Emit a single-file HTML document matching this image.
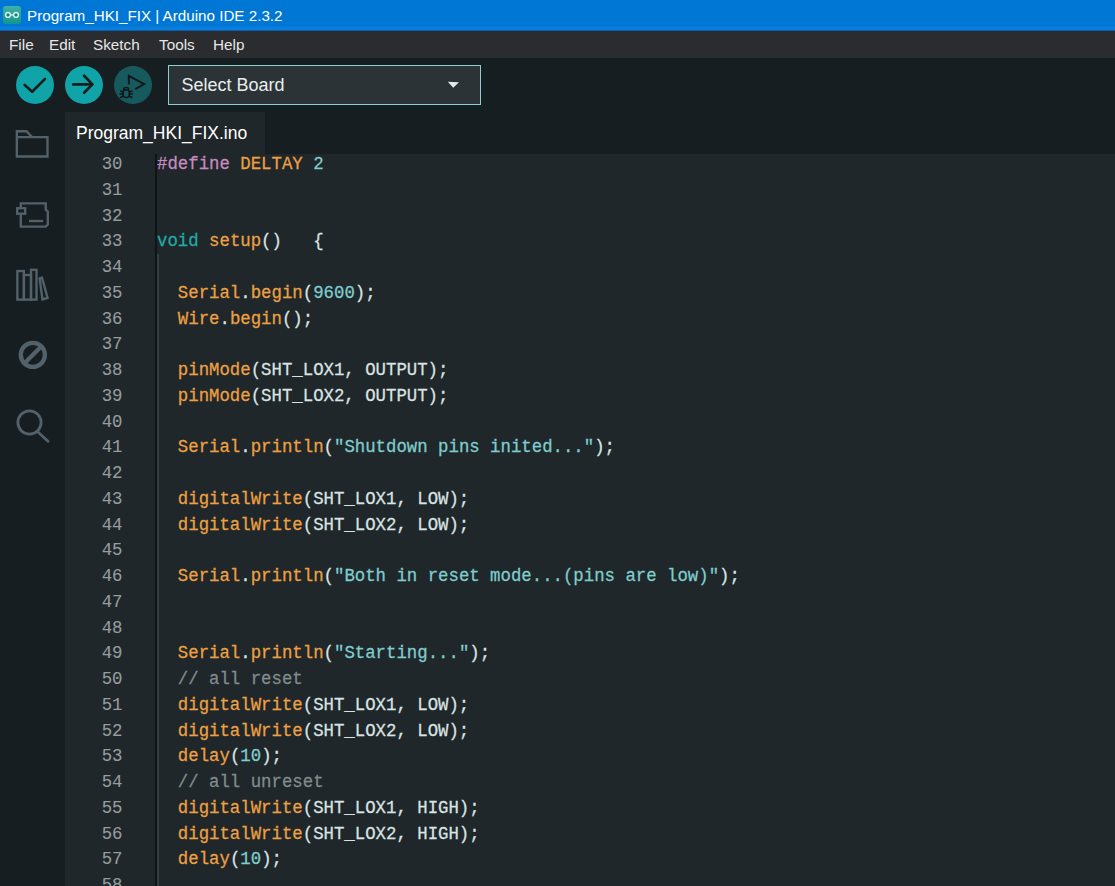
<!DOCTYPE html>
<html><head><meta charset="utf-8">
<style>
*{margin:0;padding:0;box-sizing:border-box}
html,body{width:1115px;height:886px;overflow:hidden;background:#1f272a;font-family:"Liberation Sans",sans-serif}
.abs{position:absolute}
#title{left:0;top:0;width:1115px;height:31px;background:linear-gradient(#0077d4 0,#0077d4 26px,#087ede 27.5px,#087fe0 30px,#0d3d66 31px)}
#title .t{left:27px;top:6.6px;font-size:15.2px;color:#fff;white-space:nowrap}
#logo{left:3px;top:6px;width:18px;height:18px;border-radius:3px;background:linear-gradient(#3fb0a6,#14978b)}
#menu{left:0;top:31px;width:1115px;height:27px;background:#2a2c2f}
#menu span{position:absolute;top:4.5px;font-size:15.3px;color:#e6e6e6}
#toolbar{left:0;top:58px;width:1115px;height:96px;background:#171e21}
#side{left:0;top:112px;width:65px;height:774px;background:#171e21}
#tab{left:65px;top:112px;width:200px;height:42px;background:#1f272a}
#tab span{position:absolute;left:11px;top:11.3px;font-size:17.5px;color:#fff;white-space:nowrap}
.btn{top:66px;width:38px;height:38px;border-radius:50%;background:#10a3a8}
#dd{left:168px;top:65px;width:313px;height:40px;background:#2c3337;border:1px solid #8ccfcc}
#dd span{position:absolute;left:12.5px;top:9px;font-size:18px;color:#e8eeee;white-space:nowrap}
#editor{left:65px;top:154px;width:1050px;height:732px;background:#1f272a}
#gl{left:155.2px;top:154px;width:1.6px;height:732px;background:#0e1417}
#ig{left:157px;top:254px;width:1.6px;height:632px;background:#363d41}
.ln{position:absolute;left:65px;width:57.5px;transform:scaleY(1.05);transform-origin:0 0;text-align:right;font-family:"Liberation Mono",monospace;font-size:17.35px;color:#959d9d;white-space:pre}
.cl{position:absolute;left:157px;transform:scaleY(1.05);transform-origin:0 0;font-family:"Liberation Mono",monospace;font-size:17.35px;color:#dae3e3;white-space:pre}
.f{color:#eda043}.k{color:#1eaca8}.s{color:#80cdce}.p{color:#c88ac4}.c{color:#808c8d}
.cl{-webkit-text-stroke:0.25px currentColor}.ln{-webkit-text-stroke:0.1px currentColor}
</style></head><body>
<div id="title" class="abs"><div id="logo" class="abs"></div><div class="t abs">Program_HKI_FIX | Arduino IDE 2.3.2</div></div>
<div id="menu" class="abs"><span style="left:9px">File</span><span style="left:49px">Edit</span><span style="left:93px">Sketch</span><span style="left:159px">Tools</span><span style="left:213px">Help</span></div>
<div id="toolbar" class="abs"></div>
<div class="btn abs" style="left:16px"></div>
<div class="btn abs" style="left:65px"></div>
<div class="btn abs" style="left:114px;background:#175a5e"></div>
<div id="dd" class="abs"><span>Select Board</span><svg class="abs" style="left:-169px;top:-66px" width="480" height="120"><polygon points="447.8,81.8 459,82.2 453.2,87.8" fill="#e0eaea"/></svg></div>
<div id="editor" class="abs"></div>
<div id="side" class="abs"></div>
<div id="tab" class="abs"><span>Program_HKI_FIX.ino</span></div>
<div id="gl" class="abs"></div><div id="ig" class="abs"></div>
<svg class="abs" style="left:0;top:0" width="1115" height="886" viewBox="0 0 1115 886">
<g fill="none" stroke="#171e21" stroke-width="2.7" stroke-linecap="round" stroke-linejoin="round">
<polyline points="24.7,84.9 32.2,91.7 45,78.9"/>
<line x1="73.2" y1="84.4" x2="91.9" y2="84.4"/>
<polyline points="84.1,75.8 92.4,84.4 84.1,92.7"/>
</g>
<g fill="none" stroke="#11181b" stroke-width="1.9" stroke-linejoin="miter">
<polyline points="128.8,84.4 128.8,75.9 144.2,84.1 135.2,89.1"/>
</g>
<g fill="none" stroke="#11181b" stroke-width="1.5" stroke-linecap="round">
<path d="M123.6,89.5 a2.6,2 0 0 1 5.2,0"/>
<rect x="123" y="89.8" width="6.4" height="7.6" rx="3"/>
<line x1="120.5" y1="91" x2="123" y2="92"/>
<line x1="120" y1="94" x2="123" y2="94"/>
<line x1="120.5" y1="97.5" x2="123.2" y2="96"/>
<line x1="132" y1="91" x2="129.4" y2="92"/>
<line x1="132.5" y1="94" x2="129.4" y2="94"/>
<line x1="132" y1="97.5" x2="129.2" y2="96"/>
</g>
<g fill="none" stroke="#52616a" stroke-width="2.35" stroke-linejoin="miter">
<path d="M16.85,156.5 V131.2 H26.5 L32,137.1 H47.5 V156.5 Z M16.85,137.1 H32"/>
<path d="M20.8,208 V203.3 H45.7 V209.5 L47.8,211.6 V224.5 L45.7,226.6 H20.8 V213.7"/>
<rect x="17.2" y="208.2" width="8" height="5.5"/>
<line x1="29" y1="221" x2="43.2" y2="221"/>
<rect x="17.35" y="271.05" width="6.55" height="28.55"/><rect x="23.9" y="275" width="7.1" height="24.6"/><rect x="31" y="269.8" width="5.5" height="29.8"/>
<polygon points="39.6,278.4 42,277.7 47.6,297.9 42.5,299.4"/>
</g>
<g fill="none" stroke="#52616a">
<circle cx="32.85" cy="354.85" r="12.05" stroke-width="4.3"/>
<line x1="41.2" y1="346.5" x2="24.5" y2="363.2" stroke-width="4.3"/>
<circle cx="29.5" cy="422.5" r="11.6" stroke-width="2.8"/>
<line x1="38.2" y1="432.2" x2="48" y2="441.2" stroke-width="2.8" stroke-linecap="round"/>
</g>
<g>
<circle cx="8.0" cy="14.9" r="2.35" fill="#167d72" stroke="#d4efea" stroke-width="1.5"/>
<circle cx="16.0" cy="14.9" r="2.35" fill="#167d72" stroke="#d4efea" stroke-width="1.5"/><rect x="10.6" y="14.2" width="2.8" height="1.4" fill="#d4efea"/>
</g>
</svg>
<div id="code">
<div class="ln" style="top:154.10px">30</div>
<div class="cl" style="top:154.10px"><span class="p">#define</span> <span class="f">DELTAY</span> <span class="s">2</span></div>
<div class="ln" style="top:179.85px">31</div>
<div class="ln" style="top:205.60px">32</div>
<div class="ln" style="top:231.35px">33</div>
<div class="cl" style="top:231.35px"><span class="k">void</span> <span class="f">setup</span>()   {</div>
<div class="ln" style="top:257.10px">34</div>
<div class="ln" style="top:282.85px">35</div>
<div class="cl" style="top:282.85px">  <span class="f">Serial</span>.<span class="f">begin</span>(<span class="s">9600</span>);</div>
<div class="ln" style="top:308.60px">36</div>
<div class="cl" style="top:308.60px">  <span class="f">Wire</span>.<span class="f">begin</span>();</div>
<div class="ln" style="top:334.35px">37</div>
<div class="ln" style="top:360.10px">38</div>
<div class="cl" style="top:360.10px">  <span class="f">pinMode</span>(SHT_LOX1, OUTPUT);</div>
<div class="ln" style="top:385.85px">39</div>
<div class="cl" style="top:385.85px">  <span class="f">pinMode</span>(SHT_LOX2, OUTPUT);</div>
<div class="ln" style="top:411.60px">40</div>
<div class="ln" style="top:437.35px">41</div>
<div class="cl" style="top:437.35px">  <span class="f">Serial</span>.<span class="f">println</span>(<span class="s">&quot;Shutdown pins inited...&quot;</span>);</div>
<div class="ln" style="top:463.10px">42</div>
<div class="ln" style="top:488.85px">43</div>
<div class="cl" style="top:488.85px">  <span class="f">digitalWrite</span>(SHT_LOX1, LOW);</div>
<div class="ln" style="top:514.60px">44</div>
<div class="cl" style="top:514.60px">  <span class="f">digitalWrite</span>(SHT_LOX2, LOW);</div>
<div class="ln" style="top:540.35px">45</div>
<div class="ln" style="top:566.10px">46</div>
<div class="cl" style="top:566.10px">  <span class="f">Serial</span>.<span class="f">println</span>(<span class="s">&quot;Both in reset mode...(pins are low)&quot;</span>);</div>
<div class="ln" style="top:591.85px">47</div>
<div class="ln" style="top:617.60px">48</div>
<div class="ln" style="top:643.35px">49</div>
<div class="cl" style="top:643.35px">  <span class="f">Serial</span>.<span class="f">println</span>(<span class="s">&quot;Starting...&quot;</span>);</div>
<div class="ln" style="top:669.10px">50</div>
<div class="cl" style="top:669.10px">  <span class="c">// all reset</span></div>
<div class="ln" style="top:694.85px">51</div>
<div class="cl" style="top:694.85px">  <span class="f">digitalWrite</span>(SHT_LOX1, LOW);</div>
<div class="ln" style="top:720.60px">52</div>
<div class="cl" style="top:720.60px">  <span class="f">digitalWrite</span>(SHT_LOX2, LOW);</div>
<div class="ln" style="top:746.35px">53</div>
<div class="cl" style="top:746.35px">  <span class="f">delay</span>(<span class="s">10</span>);</div>
<div class="ln" style="top:772.10px">54</div>
<div class="cl" style="top:772.10px">  <span class="c">// all unreset</span></div>
<div class="ln" style="top:797.85px">55</div>
<div class="cl" style="top:797.85px">  <span class="f">digitalWrite</span>(SHT_LOX1, HIGH);</div>
<div class="ln" style="top:823.60px">56</div>
<div class="cl" style="top:823.60px">  <span class="f">digitalWrite</span>(SHT_LOX2, HIGH);</div>
<div class="ln" style="top:849.35px">57</div>
<div class="cl" style="top:849.35px">  <span class="f">delay</span>(<span class="s">10</span>);</div>
<div class="ln" style="top:875.10px">58</div>
</div>
</body></html>
